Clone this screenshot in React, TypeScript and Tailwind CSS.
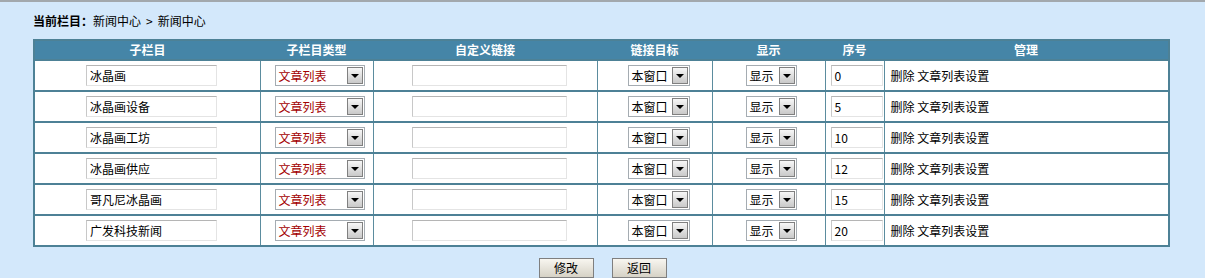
const rows = [
  { name: '冰晶画', order: '0' },
  { name: '冰晶画设备', order: '5' },
  { name: '冰晶画工坊', order: '10' },
  { name: '冰晶画供应', order: '12' },
  { name: '哥凡尼冰晶画', order: '15' },
  { name: '广发科技新闻', order: '20' },
]

const headers = ['子栏目', '子栏目类型', '自定义链接', '链接目标', '显示', '序号', '管理']
const widths = ['w-[226px]', 'w-[113px]', 'w-[224px]', 'w-[115px]', 'w-[113px]', 'w-[59px]', 'w-[285px]']

function Arrow() {
  return (
    <span className="flex h-[17px] w-[16px] items-center justify-center border border-[#808080] bg-gradient-to-b from-[#f7f7f7] to-[#c9c9c9]">
      <span className="h-0 w-0 border-x-[4px] border-t-[4px] border-x-transparent border-t-black" />
    </span>
  )
}

function FakeSelect({ label, width, red }: { label: string; width: string; red?: boolean }) {
  return (
    <div className={`flex h-[21px] items-center border border-[#a5acb2] bg-white pr-[1px] ${width}`}>
      <span className={`flex-1 pl-[3px] text-[12px] leading-[19px] ${red ? 'text-[#a30000]' : 'text-black'}`}>
        {label}
      </span>
      <Arrow />
    </div>
  )
}

function TextBox({ value, width }: { value: string; width: string }) {
  return (
    <div
      className={`h-[21px] border border-t-[#b5b5b5] border-l-[#c8c8c8] border-r-[#e4e4e4] border-b-[#e4e4e4] bg-white pl-[3px] text-[12px] leading-[19px] ${width}`}
    >
      {value}
    </div>
  )
}

export default function App() {
  return (
    <div
      className="min-h-[278px] border-t-2 border-[#a2a8ad] bg-[#d3e8fb] px-[33px] text-black"
      style={{ fontFamily: '"Noto Sans CJK SC", "Liberation Sans", sans-serif' }}
    >
      <div className="h-[37px] pt-[11px] text-[12px] leading-[16px]">
        <span className="font-bold">当前栏目：</span>新闻中心<span className="mx-[5px]">&gt;</span>新闻中心
      </div>

      <table className="w-[1135px] table-fixed border-collapse border-2 border-[#4d8196] bg-white">
        <thead>
          <tr className="h-[20px] bg-[#4585a7]">
            {headers.map((h, i) => (
              <th key={h} className={`${widths[i]} p-0 text-center text-[12px] font-bold leading-[16px] text-white`}>
                {h}
              </th>
            ))}
          </tr>
        </thead>
        <tbody>
          {rows.map((r) => (
            <tr key={r.name} className="h-[31px] border-t-2 border-[#4d8196]">
              <td className="border-r border-[#5b8c9e] p-0 pl-[51px]">
                <TextBox value={r.name} width="w-[131px]" />
              </td>
              <td className="border-r border-[#5b8c9e] p-0 pl-[14px]">
                <FakeSelect label="文章列表" width="w-[90px]" red />
              </td>
              <td className="border-r border-[#5b8c9e] p-0 pl-[38px]">
                <TextBox value="" width="w-[155px]" />
              </td>
              <td className="border-r border-[#5b8c9e] p-0 pl-[30px]">
                <FakeSelect label="本窗口" width="w-[62px]" />
              </td>
              <td className="border-r border-[#5b8c9e] p-0 pl-[33px]">
                <FakeSelect label="显示" width="w-[51px]" />
              </td>
              <td className="border-r border-[#5b8c9e] p-0 pl-[5px]">
                <TextBox value={r.order} width="w-[52px]" />
              </td>
              <td className="p-0 pl-[6px] text-[12px]">删除 文章列表设置</td>
            </tr>
          ))}
        </tbody>
      </table>

      <div className="flex justify-center gap-[18px] pt-[11px]">
        <button className="h-[20px] w-[55px] border border-[#7f7f7f] bg-gradient-to-b from-[#f8f6f0] to-[#d6d2c6] text-[12px] leading-[16px]">
          修改
        </button>
        <button className="h-[20px] w-[55px] border border-[#7f7f7f] bg-gradient-to-b from-[#f8f6f0] to-[#d6d2c6] text-[12px] leading-[16px]">
          返回
        </button>
      </div>
    </div>
  )
}
